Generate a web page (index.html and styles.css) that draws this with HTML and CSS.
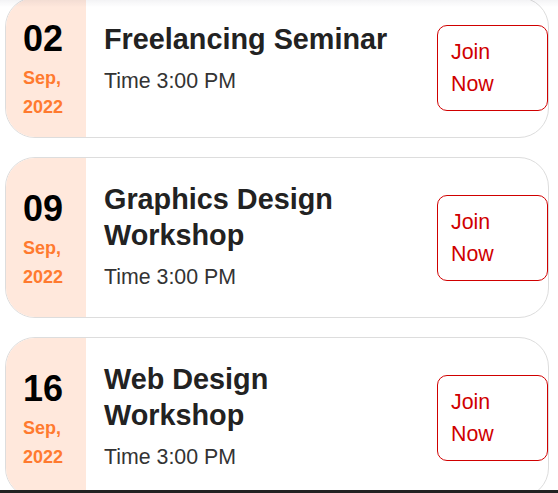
FILE: index.html
```html
<html>
  <head>
    <meta charset="utf-8">
    <title>Upcoming Events</title>
    <link rel="stylesheet" href="styles.css">
  </head>
  <body>
    <div class="top-shade"></div>
    <div class="events">
      <div class="event-card">
        <div class="event-date">
          <div class="event-day">02</div>
          <div class="event-month">Sep,<br>2022</div>
        </div>
        <div class="event-info">
          <h3 class="event-title">Freelancing Seminar</h3>
          <p class="event-time">Time 3:00 PM</p>
        </div>
        <button class="join-button">Join Now</button>
      </div>
      <div class="event-card">
        <div class="event-date">
          <div class="event-day">09</div>
          <div class="event-month">Sep,<br>2022</div>
        </div>
        <div class="event-info">
          <h3 class="event-title">Graphics Design Workshop</h3>
          <p class="event-time">Time 3:00 PM</p>
        </div>
        <button class="join-button">Join Now</button>
      </div>
      <div class="event-card">
        <div class="event-date">
          <div class="event-day">16</div>
          <div class="event-month">Sep,<br>2022</div>
        </div>
        <div class="event-info">
          <h3 class="event-title">Web Design Workshop</h3>
          <p class="event-time">Time 3:00 PM</p>
        </div>
        <button class="join-button">Join Now</button>
      </div>
    </div>
    <div class="bottom-bar"></div>
  </body>
</html>
```

FILE: styles.css
```css
body {
  margin: 0;
  padding: 0;
  background: #fff;
  font-family: "Liberation Sans", Arial, sans-serif;
  overflow: hidden;
}
.top-shade {
  position: fixed;
  top: 0;
  left: 0;
  right: 0;
  height: 7px;
  background: linear-gradient(rgba(20, 20, 60, 0.05), rgba(20, 20, 60, 0));
  z-index: 5;
}
.bottom-bar {
  position: fixed;
  left: 0;
  right: 0;
  bottom: 0;
  height: 3px;
  background: #222;
  z-index: 5;
}
.events {
  margin-top: -3px;
  padding: 0 9px 0 5px;
  display: flex;
  flex-direction: column;
  gap: 19px;
}
.event-card {
  display: flex;
  align-items: center;
  border: 1px solid #ddd;
  border-radius: 30px;
  overflow: hidden;
  background: #fff;
}
.event-date {
  align-self: stretch;
  flex-shrink: 0;
  width: 80px;
  box-sizing: border-box;
  padding: 16px 0 15px 17px;
  background: #ffe8dc;
  display: flex;
  flex-direction: column;
  justify-content: center;
  font-weight: bold;
}
.event-day {
  font-size: 36px;
  line-height: 50px;
  color: #000;
}
.event-month {
  font-size: 18px;
  line-height: 29px;
  color: #ff7a2f;
}
.event-info {
  flex: 1;
  align-self: flex-start;
  padding: 23px 40px 27px 18px;
}
.event-title {
  margin: 0 0 12px;
  font-size: 28.8px;
  line-height: 36px;
  color: #222;
}
.event-time {
  margin: 0;
  font-size: 21.33px;
  color: #333;
}
.join-button {
  flex-shrink: 0;
  width: 111px;
  padding: 10px 13px;
  text-align: left;
  font-family: inherit;
  font-size: 21.33px;
  line-height: 32px;
  color: #d00000;
  background: #fff;
  border: 1px solid #d00000;
  border-radius: 10px;
  cursor: pointer;
}
```
